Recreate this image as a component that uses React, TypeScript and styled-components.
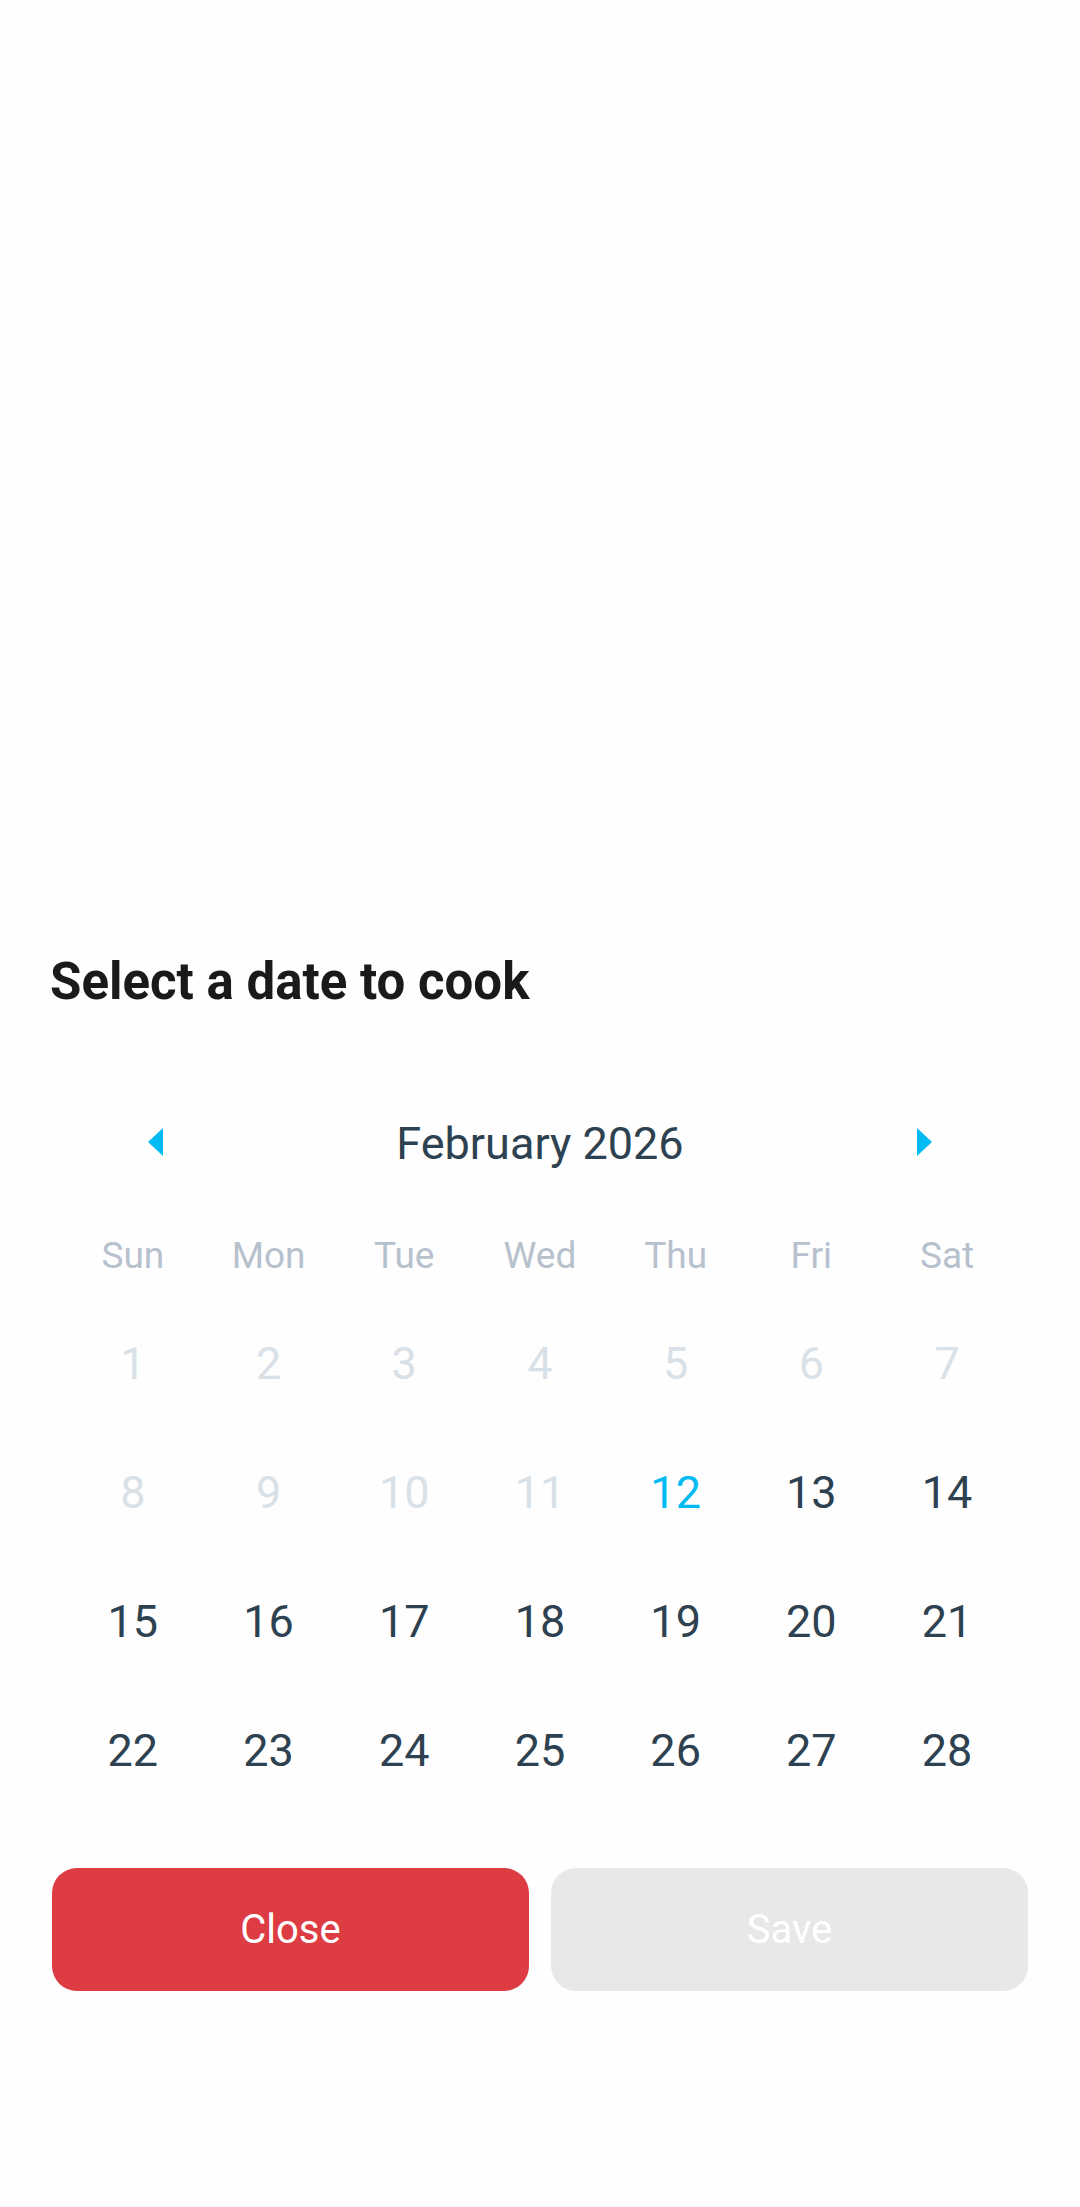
import React from "react";
import styled, { createGlobalStyle } from "styled-components";

const Global = createGlobalStyle`
  * { box-sizing: border-box; }
  body { margin: 0; background: #fefefe; font-family: Roboto, "Liberation Sans", sans-serif; }
`;
const Page = styled.main`
  min-height: 100vh;
  display: flex;
  flex-direction: column;
  justify-content: flex-end;
  padding: 0 50px 216px;
`;
const Title = styled.h1`
  margin: 0 0 96px;
  font-size: 51px;
  line-height: 60px;
  font-weight: 700;
  color: #1a1a1a;
`;
const Calendar = styled.section`
  padding: 0 15px;
`;
const Header = styled.div`
  display: flex;
  align-items: flex-start;
  justify-content: space-between;
  height: 72px;
  padding: 0 67px;
`;
const Month = styled.h2`
  margin: 0;
  font-size: 45px;
  line-height: 72px;
  font-weight: 400;
  color: #2d4150;
`;
const Arrow = styled.button`
  display: flex;
  padding: 20px 16px;
  border: 0;
  background: none;
  color: #00bbf2;
`;
const Grid = styled.table`
  width: 100%;
  border-collapse: collapse;
  table-layout: fixed;
  margin-top: 54px;
`;
const Weekday = styled.th`
  height: 65px;
  padding: 0;
  vertical-align: top;
  font-size: 37px;
  line-height: 44px;
  font-weight: 400;
  color: #b6c1cd;
`;
const Cell = styled.td`
  height: 129px;
  padding: 0;
`;
const Day = styled.button<{ $today: boolean }>`
  display: block;
  width: 88px;
  height: 88px;
  margin: 0 auto;
  padding: 0;
  border: 0;
  background: none;
  font: 400 45px/54px Roboto, "Liberation Sans", sans-serif;
  color: ${(p) => (p.$today ? "#00bbf2" : "#2d4150")};
  &:disabled { color: #d9e1e8; }
`;
const Actions = styled.div`
  display: grid;
  grid-template-columns: 1fr 1fr;
  gap: 22px;
  margin-top: 53px;
  padding: 0 2px;
`;
const Action = styled.button<{ $color: string }>`
  height: 123px;
  border: 0;
  border-radius: 25px;
  background: ${(p) => p.$color};
  font: 400 40px/48px Roboto, "Liberation Sans", sans-serif;
  color: #fff;
`;

const weekdays = ["Sun", "Mon", "Tue", "Wed", "Thu", "Fri", "Sat"];
const today = 12;

export default function App() {
  return (
    <>
      <Global />
      <Page>
        <Title>Select a date to cook</Title>
        <Calendar aria-label="Calendar">
          <Header>
            <Arrow aria-label="Previous month">
              <svg width="15" height="28" viewBox="0 0 15 28"><path d="M15 0v28L0 14z" fill="currentColor" /></svg>
            </Arrow>
            <Month>February 2026</Month>
            <Arrow aria-label="Next month">
              <svg width="15" height="28" viewBox="0 0 15 28"><path d="M0 0v28l15-14z" fill="currentColor" /></svg>
            </Arrow>
          </Header>
          <Grid>
            <thead>
              <tr>{weekdays.map((d) => <Weekday key={d} scope="col">{d}</Weekday>)}</tr>
            </thead>
            <tbody>
              {[0, 1, 2, 3].map((w) => (
                <tr key={w}>
                  {weekdays.map((d, i) => {
                    const n = w * 7 + i + 1;
                    return (
                      <Cell key={d}>
                        <Day $today={n === today} disabled={n < today}>{n}</Day>
                      </Cell>
                    );
                  })}
                </tr>
              ))}
            </tbody>
          </Grid>
        </Calendar>
        <Actions>
          <Action $color="#dc3c42">Close</Action>
          <Action $color="#e8e8e8" disabled>Save</Action>
        </Actions>
      </Page>
    </>
  );
}
